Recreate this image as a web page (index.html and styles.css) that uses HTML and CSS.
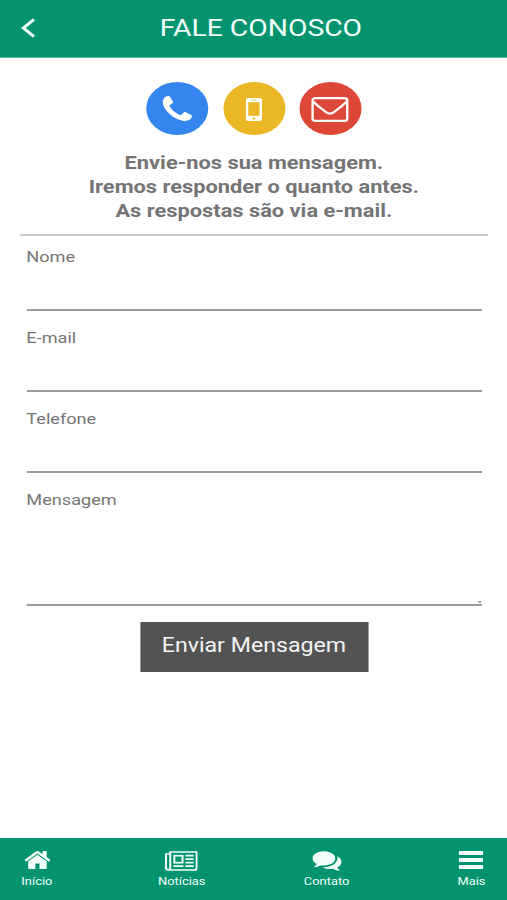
FILE: index.html
```html
<!DOCTYPE html>
<html lang="pt-BR">
<head>
    <meta charset="UTF-8">
    <meta name="viewport" content="width=device-width, initial-scale=1.0">
    <title>Fale Conosco</title>
    <link rel="stylesheet" href="styles.css">
</head>
<body>
    <div class="page">
        <header class="topbar">
            <svg class="back" viewBox="0 0 12 20"><path d="M11 1.5L2 10l9 8.5" fill="none" stroke="currentColor" stroke-width="2.8"/></svg>
            <h1>FALE CONOSCO</h1>
        </header>

        <main class="content">
            <div class="contacts">
                <a class="circle blue">
                    <svg width="25" height="25" viewBox="192 128 1408 1408" fill="currentColor"><path d="M1600 1240q0 27-10 70.5t-21 68.5q-21 50-122 106-94 51-186 51-27 0-53-3.5t-57.5-12.5-47-14.5-55.5-20.5-49-18q-98-35-175-83-127-79-264-216t-216-264q-48-77-83-175-3-9-18-49t-20.5-55.5-14.5-47-12.5-57.5-3.5-53q0-92 51-186 56-101 106-122 25-11 68.5-21t70.5-10q14 0 21 3 18 6 53 76 11 19 30 54t35 63.5 31 53.5q3 4 17.5 25t21.5 35.5 7 28.5q0 20-28.5 50t-62 55-62 53-28.5 46q0 9 5 22.5t8.5 20.5 14 24 11.5 19q76 137 174 235t235 174q2 1 19 11.5t24 14 20.5 8.5 22.5 5q18 0 46-28.5t53-62 55-62 50-28.5q14 0 28.5 7t35.5 21.5 25 17.5q25 15 53.5 31t63.5 35 54 30q70 35 76 53 3 7 3 21z"/></svg>
                </a>
                <a class="circle yellow">
                    <svg width="14" height="23" viewBox="0 0 14 23" fill="currentColor"><path fill-rule="evenodd" d="M2 0h10q2 0 2 2v19q0 2-2 2H2q-2 0-2-2V2q0-2 2-2zM2.2 4.3v13.4h9.6V4.3zM5 1.7v.8h4v-.8zM7 19.2a1.2 1.2 0 1 0 .01 0z"/></svg>
                </a>
                <a class="circle red">
                    <svg width="32" height="25" viewBox="0 0 32 25" fill="none" stroke="currentColor" stroke-width="2.2"><rect x="1.100" y="1.100" width="29.800" height="22.800" rx="2.500"/><path d="M1.500 4.500Q6 9.500 12.500 15Q16 18.500 19.500 15Q26 9.500 30.500 4.500"/></svg>
                </a>
            </div>

            <p class="intro">Envie-nos sua mensagem.<br>Iremos responder o quanto antes.<br>As respostas são via e-mail.</p>

            <form class="form">
                <label for="nome">Nome</label>
                <input type="text" id="nome">
                <label for="email">E-mail</label>
                <input type="email" id="email">
                <label for="telefone">Telefone</label>
                <input type="tel" id="telefone">
                <label for="mensagem">Mensagem</label>
                <div class="message">
                    <textarea id="mensagem"></textarea>
                    <span class="grip"></span>
                </div>
                <button type="button">Enviar Mensagem</button>
            </form>
        </main>

        <nav class="tabs">
            <a class="tab">
                <svg width="22" height="18" viewBox="97 253 1598 1283" preserveAspectRatio="none" fill="currentColor"><path d="M1472 992v480q0 26-19 45t-45 19h-384v-384h-256v384h-384q-26 0-45-19t-19-45v-480q0-1 .5-3t.5-3l575-474 575 474q1 2 1 6zm223-69l-62 74q-8 9-21 11h-3q-13 0-21-7l-692-577-692 577q-12 8-24 7-13-2-21-11l-62-74q-8-10-7-23.5t11-21.500l719-599q32-26 76-26t76 26l244 204v-195q0-14 9-23t23-9h192q14 0 23 9t9 23v408l219 182q10 8 11 21.500t-7 23.500z"/></svg>
                <span>Início</span>
            </a>
            <a class="tab">
                <svg width="28" height="20" viewBox="0 0 28 20" fill="none" stroke="currentColor" stroke-width="1.700"><path d="M4.500 16.500V1h22.600v16q0 2-2 2H2.800Q.9 19 .9 17V3h3.600M4.500 16q0 3-1.700 3"/><rect x="8" y="4.700" width="7" height="7"/><path d="M17.500 4.700h7M17.500 8.200h7M17.500 11.700h7M7.200 15.200h8.600M17.500 15.200h7"/></svg>
                <span>Notícias</span>
            </a>
            <a class="tab">
                <svg width="25" height="20" viewBox="0 256 1792 1408" fill="currentColor"><path d="M1408 768q0 139-94 257t-256.500 186.500-353.500 68.500q-86 0-176-16-124 88-278 128-36 9-86 16h-3q-11 0-20.500-8t-11.500-21q-1-3-1-6.500t.5-6.500 2-6l2.500-5 3.500-5.500 4-5 4.500-5 4-4.500q5-6 23-25t26-29.500 22.500-29 25-38.500 20.500-44q-124-72-195-177t-71-224q0-139 94-257t256.500-186.500 353.500-68.500 353.500 68.500 256.500 186.500 94 257zm384 256q0 120-71 224.500t-195 176.500q10 24 20.500 44t25 38.500 22.500 29 26 29.500 23 25q1 1 4 4.500t4.500 5 4 5 3.500 5.500l2.500 5 2 6 .5 6.500-1 6.500q-3 14-13 22t-22 7q-50-7-86-16-154-40-278-128-90 16-176 16-271 0-472-132 58 4 88 4 161 0 309-45t264-129q125-92 192-212t67-254q0-77-23-152 129 71 204 178t75 230z"/></svg>
                <span>Contato</span>
            </a>
            <a class="tab">
                <svg width="21" height="18" viewBox="0 0 21 18" fill="currentColor"><rect width="21" height="4" rx=".8"/><rect y="7" width="21" height="4" rx=".8"/><rect y="14" width="21" height="4" rx=".8"/></svg>
                <span>Mais</span>
            </a>
        </nav>
    </div>
</body>
</html>
```
FILE: styles.css
```css
body {
    margin: 0;
    background: #fff;
    font-family: Roboto, sans-serif;
    overflow: hidden;
}
.page {
    display: flex;
    flex-direction: column;
    width: 434px;
    height: 900px;
    transform: scaleX(1.17);
    transform-origin: 0 0;
}
.topbar {
    display: flex;
    align-items: center;
    box-sizing: border-box;
    height: 58px;
    padding: 0 18px 2px;
    background: #03946f;
    border-bottom: 1px solid #5cb89f;
    color: #f2fffb;
}
.back {
    width: 12px;
    height: 20px;
}
h1 {
    flex: 1;
    margin: 0;
    font-size: 24.2px;
    font-weight: 400;
    text-align: center;
}
.content {
    flex: 1;
    padding: 24px 17px 0;
}
.contacts {
    display: flex;
    justify-content: center;
    gap: 12.4px;
}
.circle {
    display: flex;
    align-items: center;
    justify-content: center;
    box-sizing: border-box;
    width: 53px;
    height: 53px;
    padding-top: 1px;
    border-radius: 50%;
    color: #fff;
}
.blue {
    padding: 0 0 1px;
    background: #3486ee;
}
.yellow {
    background: #ebb725;
}
.red {
    padding-top: 2px;
    background: #dc4737;
}
.intro {
    margin: 16px 0 0;
    padding-bottom: 10px;
    border-bottom: 2px solid #cbcbcb;
    color: #747474;
    font-size: 18.650px;
    font-weight: 700;
    line-height: 24.200px;
    text-align: center;
}
.form {
    display: flex;
    flex-direction: column;
    padding: 11px 5.500px 0;
}
label {
    color: #757575;
    font-size: 15.500px;
    line-height: 20px;
}
input,
textarea {
    display: block;
    box-sizing: border-box;
    width: 100%;
    margin: 0;
    padding: 0;
    border: 0;
    border-bottom: 2px solid #999;
    background: none;
    font: inherit;
    outline: none;
    resize: none;
}
input {
    height: 44px;
    margin-bottom: 17px;
}
.message {
    position: relative;
}
textarea {
    height: 96px;
}
.grip {
    position: absolute;
    right: 1px;
    bottom: 3px;
    width: 2px;
    height: 2px;
    background: #999;
}
button {
    align-self: center;
    width: 195px;
    height: 50px;
    margin-top: 16px;
    padding: 0 0 2px;
    border: 0;
    background: #535353;
    color: #f5f5f5;
    font-family: inherit;
    font-size: 19.800px;
}
.tabs {
    display: flex;
    justify-content: space-between;
    box-sizing: border-box;
    height: 62px;
    padding: 13px 4.500px 0 5px;
    background: #03946f;
    color: #f2fffb;
}
.tab {
    display: flex;
    flex-direction: column;
    align-items: center;
    justify-content: space-between;
    width: 53px;
    height: 37px;
    font-size: 11px;
    line-height: 13px;
}
```
